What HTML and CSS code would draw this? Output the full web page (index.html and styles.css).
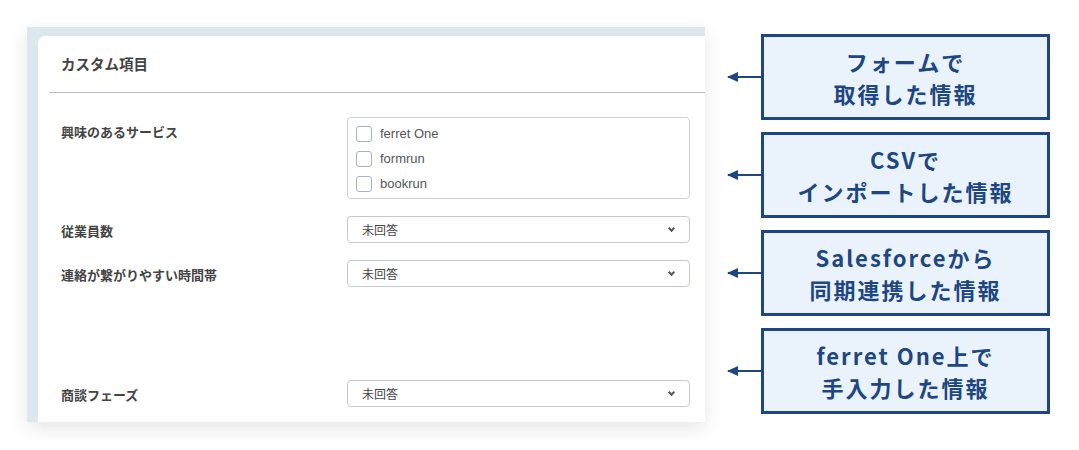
FILE: index.html
```html
<!DOCTYPE html>
<html lang="ja">
<head>
<meta charset="UTF-8">
<meta name="viewport" content="width=device-width, initial-scale=1.0">
<title>カスタム項目</title>
<link rel="stylesheet" href="styles.css">
</head>
<body>

<div class="page">
  <!-- フォーム画面 -->
  <div class="panel">
    <div class="card">
      <div class="card-head">カスタム項目</div>

      <div class="form">
        <div class="label">興味のあるサービス</div>
        <div class="checks">
          <label class="check"><span class="box"></span>ferret One</label>
          <label class="check"><span class="box"></span>formrun</label>
          <label class="check"><span class="box"></span>bookrun</label>
        </div>

        <div class="label">従業員数</div>
        <div class="select">未回答<span class="chev"></span></div>

        <div class="label">連絡が繋がりやすい時間帯</div>
        <div class="select">未回答<span class="chev"></span></div>

        <div class="spacer"></div>

        <div class="label">商談フェーズ</div>
        <div class="select">未回答<span class="chev"></span></div>
      </div>
    </div>
  </div>

  <!-- 説明 -->
  <div class="notes">
    <div class="note">
      <span class="arrow"></span>
      <div class="note-box"><span>フォームで</span><span>取得した情報</span></div>
    </div>
    <div class="note">
      <span class="arrow"></span>
      <div class="note-box"><span>CSVで</span><span>インポートした情報</span></div>
    </div>
    <div class="note">
      <span class="arrow"></span>
      <div class="note-box"><span>Salesforceから</span><span>同期連携した情報</span></div>
    </div>
    <div class="note">
      <span class="arrow"></span>
      <div class="note-box"><span>ferret One上で</span><span>手入力した情報</span></div>
    </div>
  </div>
</div>

</body>
</html>
```

FILE: styles.css
```css
body {
  margin: 0;
  background: #fff;
  font-family: "Noto Sans CJK JP", "Noto Sans", sans-serif;
  color: #333;
}

.page {
  display: flex;
  align-items: flex-start;
  width: 1079px;
  height: 450px;
  overflow: hidden;
}

.panel {
  margin: 27px 0 0 27px;
  width: 678px;
  height: 395px;
  box-sizing: border-box;
  padding: 9px 0 0 11px;
  background: #dbe9ef;
  box-shadow: 0 6px 18px rgba(0,0,0,0.10);
}

.card {
  height: 100%;
  background: #fff;
  border-top-left-radius: 8px;
}

.card-head {
  height: 56px;
  line-height: 56px;
  margin-left: 11px;
  padding-left: 12px;
  font-size: 14.5px;
  font-weight: bold;
  color: #444;
  border-bottom: 1px solid #b8bdca;
}

.form {
  display: grid;
  grid-template-columns: 286px 343px;
  row-gap: 17px;
  padding: 24px 0 0 23px;
}

.label {
  font-size: 13px;
  font-weight: bold;
  color: #444;
  padding-top: 5px;
}

.checks {
  border: 1px solid #ccd1da;
  border-radius: 4px;
  padding: 7px 8px 6px;
  display: flex;
  flex-direction: column;
  gap: 8px;
}

.check {
  display: flex;
  align-items: center;
  gap: 8px;
  font-family: "Liberation Sans", "Noto Sans CJK JP", sans-serif;
  font-size: 13px;
  color: #555;
  height: 17px;
}

.box {
  width: 14px;
  height: 14px;
  border: 1.5px solid #a9b1c0;
  border-radius: 3px;
  background: #fff;
}

.select {
  position: relative;
  height: 27px;
  box-sizing: border-box;
  border: 1px solid #c4c9d3;
  border-radius: 4px;
  padding-left: 14px;
  line-height: 25px;
  font-size: 12px;
  color: #444;
  align-self: start;
}

.chev {
  position: absolute;
  right: 15px;
  top: 9px;
  width: 3px;
  height: 3px;
  border-right: 2px solid #555;
  border-bottom: 2px solid #555;
  transform: rotate(45deg);
}

.spacer {
  grid-column: span 2;
  height: 59px;
}

.notes {
  display: flex;
  flex-direction: column;
  gap: 12px;
  margin: 34px 0 0 23px;
}

.note {
  display: flex;
  align-items: center;
}

.arrow {
  position: relative;
  width: 33px;
  height: 2px;
  background: #1d4682;
}

.arrow::before {
  content: "";
  position: absolute;
  left: -1px;
  top: -4px;
  border-right: 11px solid #1d4682;
  border-top: 5px solid transparent;
  border-bottom: 5px solid transparent;
}

.note-box {
  width: 289px;
  height: 86px;
  box-sizing: border-box;
  border: 3px solid #1d4682;
  background: #eaf2fb;
  color: #1d4682;
  font-size: 22px;
  font-weight: bold;
  line-height: 32px;
  letter-spacing: 2px;
  text-align: center;
  display: flex;
  flex-direction: column;
  align-items: center;
  justify-content: center;
}
```
